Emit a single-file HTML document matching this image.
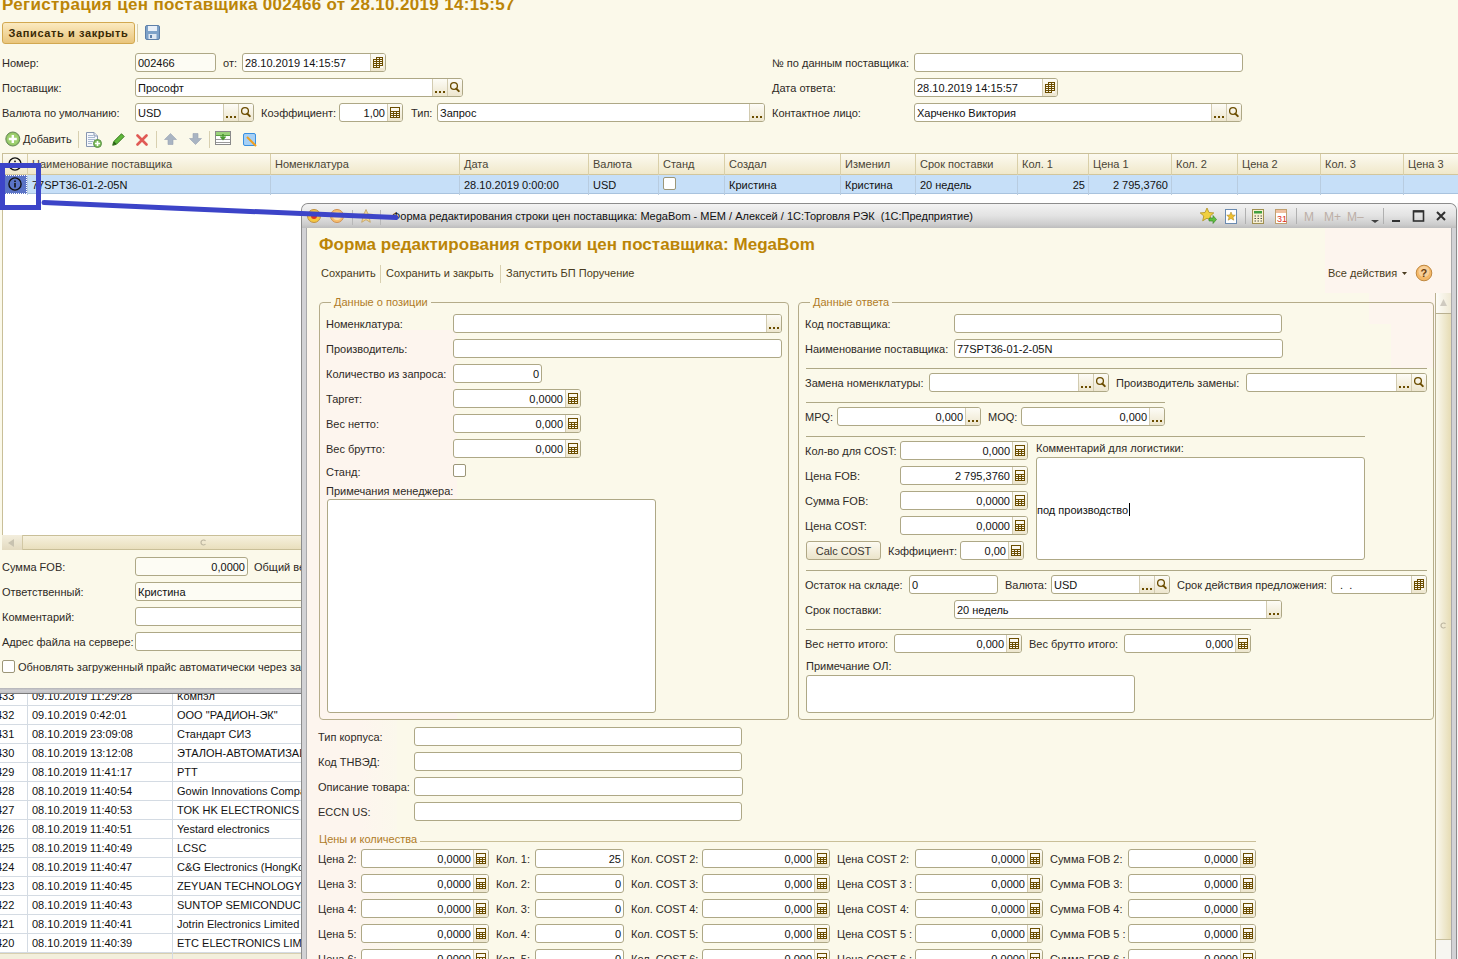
<!DOCTYPE html><html><head><meta charset="utf-8"><style>
*{box-sizing:border-box;margin:0;padding:0}
html,body{width:1458px;height:959px;overflow:hidden;background:#fbf9ea;font-family:"Liberation Sans",sans-serif;font-size:11px;color:#2e2a26}
.t{position:absolute;white-space:nowrap;color:#2e2a26}
.inp{position:absolute;border:1px solid #aea886;border-radius:3px;overflow:hidden}
.it{position:absolute;top:0;white-space:pre;color:#111}
.ib{position:absolute;top:0;width:15px;border-left:1px solid #d2cbb0;background:linear-gradient(#fdfcf6,#ede6ce)}
.ib svg{position:absolute;left:-1px;top:0}
.cb{position:absolute;border:1px solid #9c9678;border-radius:2px;background:#fff}
.grp{position:absolute;border:1px solid #b5ac8a;border-radius:4px;padding:0}
legend{padding:0 3px;height:14px;line-height:14px;color:#b07c28;font-size:11px}
.gt{position:absolute;height:14px;line-height:14px;color:#b07c28;background:#fbf9ea;text-align:center;white-space:nowrap}
.hc{position:absolute;top:0;height:21px;line-height:21px;padding-left:4px;border-left:1px solid #d9cfa8;white-space:nowrap;color:#4a4536;overflow:hidden}
.rc{position:absolute;top:1px;height:19px;line-height:19px;padding:0 3px 0 4px;border-left:1px solid #b8cce0;white-space:nowrap;color:#111;overflow:hidden}
</style></head><body>
<div class="t" style="left:2px;top:-5px;height:20px;line-height:20px;font-size:17px;font-weight:bold;color:#bb8507;letter-spacing:0.34px">Регистрация цен поставщика 002466 от 28.10.2019 14:15:57</div>
<div style="position:absolute;left:2px;top:22px;width:133px;height:22px;border:1px solid #d2a850;border-radius:3px;background:linear-gradient(#fbeac0,#e9c57c);"></div>
<div class="t" style="left:2px;top:22px;width:133px;height:22px;line-height:22px;text-align:center;font-weight:bold;color:#3a2a05;letter-spacing:0.6px">Записать и закрыть</div>
<div style="position:absolute;left:137px;top:24px;width:1px;height:18px;background:#d8d0b0"></div>
<svg style="position:absolute;left:145px;top:25px" width="15" height="15" viewBox="0 0 15 15"><rect x="0.5" y="0.5" width="14" height="14" rx="1.5" fill="#7ea2c8" stroke="#5d7fa8"/><rect x="3" y="1" width="9" height="5" fill="#e9f0f8"/><rect x="3.5" y="9" width="8" height="5" fill="#dfe8f2"/><rect x="5" y="10" width="2" height="3" fill="#5d7fa8"/></svg>
<div class="t" style="left:2px;top:54px;height:19px;line-height:19px;">Номер:</div>
<div class="inp" style="left:135px;top:53px;width:81px;height:19px;background:#fdfcf4">
<div class="it" style="left:2px;top:1px;line-height:17px;color:#111">002466</div>
</div>
<div class="t" style="left:223px;top:54px;height:19px;line-height:19px;">от:</div>
<div class="inp" style="left:242px;top:53px;width:144px;height:19px;background:#fff">
<div class="it" style="left:2px;top:1px;line-height:17px;color:#111">28.10.2019 14:15:57</div>
<div class="ib" style="right:0px;height:17px"><svg width="15" height="17" viewBox="0 0 15 17"><path d="M6 3h7v11h-7zM3 5h10v8h-10z" fill="#fbf8ee"/><path d="M6 3h7v1h-7zM6 4h1v1h-1zM9 4h1v1h-1zM12 4h1v1h-1zM3 5h10v1h-10zM3 6h1v1h-1zM6 6h1v1h-1zM9 6h1v1h-1zM12 6h1v1h-1zM3 7h10v1h-10zM3 8h1v1h-1zM6 8h1v1h-1zM9 8h1v1h-1zM12 8h1v1h-1zM3 9h10v1h-10zM3 10h1v1h-1zM6 10h1v1h-1zM9 10h1v1h-1zM12 10h1v1h-1zM3 11h10v1h-10zM3 12h1v1h-1zM6 12h1v1h-1zM9 12h1v1h-1zM3 13h7v1h-7z" fill="#6b4d00"/></svg></div>
</div>
<div class="t" style="left:772px;top:54px;height:19px;line-height:19px;">№ по данным поставщика:</div>
<div class="inp" style="left:914px;top:53px;width:329px;height:19px;background:#fff">
</div>
<div class="t" style="left:2px;top:79px;height:19px;line-height:19px;">Поставщик:</div>
<div class="inp" style="left:135px;top:78px;width:328px;height:19px;background:#fff">
<div class="it" style="left:2px;top:1px;line-height:17px;color:#111">Прософт</div>
<div class="ib" style="right:15px;height:17px"><svg width="15" height="17" viewBox="0 0 15 17"><path d="M3 12h2v2h-2zM7 12h2v2h-2zM11 12h2v2h-2z" fill="#6b4d00"/></svg></div>
<div class="ib" style="right:0px;height:17px"><svg width="15" height="17" viewBox="0 0 15 17"><circle cx="7" cy="7" r="3.4" fill="none" stroke="#6b4d00" stroke-width="1.3"/><path d="M9.3 9.6L11.8 12.1" stroke="#6b4d00" stroke-width="2" stroke-linecap="round"/></svg></div>
</div>
<div class="t" style="left:772px;top:79px;height:19px;line-height:19px;">Дата ответа:</div>
<div class="inp" style="left:914px;top:78px;width:144px;height:19px;background:#fff">
<div class="it" style="left:2px;top:1px;line-height:17px;color:#111">28.10.2019 14:15:57</div>
<div class="ib" style="right:0px;height:17px"><svg width="15" height="17" viewBox="0 0 15 17"><path d="M6 3h7v11h-7zM3 5h10v8h-10z" fill="#fbf8ee"/><path d="M6 3h7v1h-7zM6 4h1v1h-1zM9 4h1v1h-1zM12 4h1v1h-1zM3 5h10v1h-10zM3 6h1v1h-1zM6 6h1v1h-1zM9 6h1v1h-1zM12 6h1v1h-1zM3 7h10v1h-10zM3 8h1v1h-1zM6 8h1v1h-1zM9 8h1v1h-1zM12 8h1v1h-1zM3 9h10v1h-10zM3 10h1v1h-1zM6 10h1v1h-1zM9 10h1v1h-1zM12 10h1v1h-1zM3 11h10v1h-10zM3 12h1v1h-1zM6 12h1v1h-1zM9 12h1v1h-1zM3 13h7v1h-7z" fill="#6b4d00"/></svg></div>
</div>
<div class="t" style="left:2px;top:104px;height:19px;line-height:19px;">Валюта по умолчанию:</div>
<div class="inp" style="left:135px;top:103px;width:119px;height:19px;background:#fff">
<div class="it" style="left:2px;top:1px;line-height:17px;color:#111">USD</div>
<div class="ib" style="right:15px;height:17px"><svg width="15" height="17" viewBox="0 0 15 17"><path d="M3 12h2v2h-2zM7 12h2v2h-2zM11 12h2v2h-2z" fill="#6b4d00"/></svg></div>
<div class="ib" style="right:0px;height:17px"><svg width="15" height="17" viewBox="0 0 15 17"><circle cx="7" cy="7" r="3.4" fill="none" stroke="#6b4d00" stroke-width="1.3"/><path d="M9.3 9.6L11.8 12.1" stroke="#6b4d00" stroke-width="2" stroke-linecap="round"/></svg></div>
</div>
<div class="t" style="left:261px;top:104px;height:19px;line-height:19px;">Коэффициент:</div>
<div class="inp" style="left:339px;top:103px;width:64px;height:19px;background:#fff">
<div class="it" style="right:17px;top:1px;text-align:right;line-height:17px">1,00</div>
<div class="ib" style="right:0px;height:17px"><svg width="15" height="17" viewBox="0 0 15 17"><path d="M3 3h10v11h-10z" fill="#fbf8ee"/><path d="M3 3h10v1h-10zM3 4h1v1h-1zM12 4h1v1h-1zM3 5h1v1h-1zM12 5h1v1h-1zM3 6h1v1h-1zM12 6h1v1h-1zM3 7h10v1h-10zM3 8h1v1h-1zM6 8h1v1h-1zM9 8h1v1h-1zM12 8h1v1h-1zM3 9h10v1h-10zM3 10h1v1h-1zM6 10h1v1h-1zM9 10h1v1h-1zM12 10h1v1h-1zM3 11h10v1h-10zM3 12h1v1h-1zM6 12h1v1h-1zM9 12h1v1h-1zM12 12h1v1h-1zM3 13h10v1h-10z" fill="#6b4d00"/></svg></div>
</div>
<div class="t" style="left:411px;top:104px;height:19px;line-height:19px;">Тип:</div>
<div class="inp" style="left:437px;top:103px;width:328px;height:19px;background:#fff">
<div class="it" style="left:2px;top:1px;line-height:17px;color:#111">Запрос</div>
<div class="ib" style="right:0px;height:17px"><svg width="15" height="17" viewBox="0 0 15 17"><path d="M3 12h2v2h-2zM7 12h2v2h-2zM11 12h2v2h-2z" fill="#6b4d00"/></svg></div>
</div>
<div class="t" style="left:772px;top:104px;height:19px;line-height:19px;">Контактное лицо:</div>
<div class="inp" style="left:914px;top:103px;width:328px;height:19px;background:#fff">
<div class="it" style="left:2px;top:1px;line-height:17px;color:#111">Харченко Виктория</div>
<div class="ib" style="right:15px;height:17px"><svg width="15" height="17" viewBox="0 0 15 17"><path d="M3 12h2v2h-2zM7 12h2v2h-2zM11 12h2v2h-2z" fill="#6b4d00"/></svg></div>
<div class="ib" style="right:0px;height:17px"><svg width="15" height="17" viewBox="0 0 15 17"><circle cx="7" cy="7" r="3.4" fill="none" stroke="#6b4d00" stroke-width="1.3"/><path d="M9.3 9.6L11.8 12.1" stroke="#6b4d00" stroke-width="2" stroke-linecap="round"/></svg></div>
</div>
<svg style="position:absolute;left:5px;top:131px" width="16" height="16" viewBox="0 0 16 16"><circle cx="7.8" cy="8" r="7" fill="#8cc063" stroke="#6a8a5a" stroke-width="1"/><circle cx="7.8" cy="8" r="5.8" fill="#9fd070"/><path d="M7.8 4v8M3.8 8h8" stroke="#fff" stroke-width="2.4"/></svg>
<div class="t" style="left:23px;top:130px;height:18px;line-height:18px;">Добавить</div>
<div style="position:absolute;left:78px;top:131px;width:1px;height:17px;background:#d8d0b0"></div>
<svg style="position:absolute;left:86px;top:132px" width="16" height="16" viewBox="0 0 16 16"><path d="M0.5 0.5h7.5l3.5 3.5v10.5h-11z" fill="#f6f8fc" stroke="#8796b0"/><path d="M8 0.5v3.5h3.5" fill="#dfe6f0" stroke="#8796b0"/><path d="M2 3.5h5M2 5.5h7M2 7.5h7M2 9.5h5M2 11.5h4" stroke="#a8b8d0"/><circle cx="11.5" cy="11.5" r="4" fill="#7fbf5a" stroke="#5a8f48"/><path d="M11.5 9v5M9 11.5h5" stroke="#fff" stroke-width="1.6"/></svg>
<svg style="position:absolute;left:112px;top:133px" width="13" height="13" viewBox="0 0 13 13"><path d="M9.5 0.8l2.7 2.7-7.8 7.8-3.7 1 1-3.7z" fill="#5fb83a" stroke="#3a7a20"/><path d="M1 12l1-3.5 2.5 2.5z" fill="#2a5a18"/></svg>
<svg style="position:absolute;left:136px;top:134px" width="12" height="12" viewBox="0 0 12 12"><path d="M1.5 1.5l9 9M10.5 1.5l-9 9" stroke="#e05a55" stroke-width="2.6" stroke-linecap="round"/></svg>
<div style="position:absolute;left:156px;top:131px;width:1px;height:17px;background:#d8d0b0"></div>
<svg style="position:absolute;left:164px;top:133px" width="13" height="12" viewBox="0 0 13 12"><path d="M6.5 0.5l6 6h-3.5v5h-5v-5h-3.5z" fill="#a9b4c2" stroke="#98a3b3" stroke-width="0.6"/></svg>
<svg style="position:absolute;left:189px;top:133px" width="13" height="12" viewBox="0 0 13 12"><path d="M6.5 11.5l6-6h-3.5v-5h-5v5h-3.5z" fill="#a9b4c2" stroke="#98a3b3" stroke-width="0.6"/></svg>
<div style="position:absolute;left:209px;top:131px;width:1px;height:17px;background:#d8d0b0"></div>
<svg style="position:absolute;left:215px;top:131px" width="16" height="14" viewBox="0 0 16 14"><rect x="0.5" y="0.5" width="15" height="13" fill="#fff" stroke="#8a8a8a"/><rect x="1" y="1" width="14" height="3" fill="#9ad27a"/><path d="M1 4.5h14" stroke="#5aa040"/><path d="M1 8.5h14M1 11.5h14" stroke="#9a9a9a"/><path d="M8 3v5M5.5 5.5l2.5 2.8 2.5-2.8" stroke="#4a9a30" stroke-width="1.6" fill="none"/></svg>
<svg style="position:absolute;left:243px;top:133px" width="15" height="14" viewBox="0 0 15 14"><rect x="0.5" y="0.5" width="12" height="12" rx="1.5" fill="#a6d0f5" stroke="#3a90e0"/><path d="M4 4l9 9" stroke="#f0a020" stroke-width="2"/></svg>
<div style="position:absolute;left:2px;top:153px;width:1456px;height:397px;background:#fff;border-left:1px solid #c9bf98;border-top:1px solid #c9bf98"></div>
<div style="position:absolute;left:3px;top:154px;width:1455px;height:21px;background:linear-gradient(#fcfaf0,#f0e8ca);border-bottom:1px solid #d2c69c"></div>
<div style="position:absolute;left:3px;top:154px;width:1455px;height:21px">
<div class="hc" style="left:-1px;width:25px;border-left:none"></div>
<div class="hc" style="left:24px;width:243px;">Наименование поставщика</div>
<div class="hc" style="left:267px;width:189px;">Номенклатура</div>
<div class="hc" style="left:456px;width:129px;">Дата</div>
<div class="hc" style="left:585px;width:70px;">Валюта</div>
<div class="hc" style="left:655px;width:66px;">Станд</div>
<div class="hc" style="left:721px;width:116px;">Создал</div>
<div class="hc" style="left:837px;width:75px;">Изменил</div>
<div class="hc" style="left:912px;width:102px;">Срок поставки</div>
<div class="hc" style="left:1014px;width:71px;">Кол. 1</div>
<div class="hc" style="left:1085px;width:83px;">Цена 1</div>
<div class="hc" style="left:1168px;width:66px;">Кол. 2</div>
<div class="hc" style="left:1234px;width:83px;">Цена 2</div>
<div class="hc" style="left:1317px;width:83px;">Кол. 3</div>
<div class="hc" style="left:1400px;width:55px;">Цена 3</div>
</div>
<svg style="position:absolute;left:8px;top:157px" width="14" height="14" viewBox="0 0 14 14"><circle cx="7" cy="7" r="6.1" fill="none" stroke="#111" stroke-width="1.4"/><rect x="6.2" y="3.6" width="1.6" height="1.6" fill="#111"/></svg>
<div style="position:absolute;left:3px;top:175px;width:1455px;height:19px;background:#c6dff8;border-bottom:1px solid #a9c3de"></div>
<div style="position:absolute;left:3px;top:175px;width:1455px;height:19px">
<div class="rc" style="left:-1px;width:25px;border-left:none"></div>
<div class="rc" style="left:24px;width:243px;">77SPT36-01-2-05N</div>
<div class="rc" style="left:267px;width:189px;"></div>
<div class="rc" style="left:456px;width:129px;">28.10.2019 0:00:00</div>
<div class="rc" style="left:585px;width:70px;">USD</div>
<div class="rc" style="left:655px;width:66px;"></div>
<div class="rc" style="left:721px;width:116px;">Кристина</div>
<div class="rc" style="left:837px;width:75px;">Кристина</div>
<div class="rc" style="left:912px;width:102px;">20 недель</div>
<div class="rc" style="left:1014px;width:71px;text-align:right;">25</div>
<div class="rc" style="left:1085px;width:83px;text-align:right;">2 795,3760</div>
<div class="rc" style="left:1168px;width:66px;"></div>
<div class="rc" style="left:1234px;width:83px;"></div>
<div class="rc" style="left:1317px;width:83px;"></div>
<div class="rc" style="left:1400px;width:55px;"></div>
</div>
<div style="position:absolute;left:3px;top:175px;width:24px;height:19px;background:#5b74c6;border:1px dotted #fff"></div>
<svg style="position:absolute;left:8px;top:177px" width="14" height="14" viewBox="0 0 14 14"><circle cx="7" cy="7" r="6.1" fill="none" stroke="#111" stroke-width="1.4"/><rect x="6.2" y="3.5" width="1.6" height="1.6" fill="#111"/><rect x="6.2" y="6" width="1.6" height="4.5" fill="#111"/></svg>
<div class="cb" style="left:663px;top:177px;width:13px;height:13px"></div>
<div style="position:absolute;left:2px;top:535px;width:1456px;height:15px;background:linear-gradient(#f6f1de,#e9dfbd);border:1px solid #c9bf98"></div>
<div style="position:absolute;left:2px;top:535px;width:21px;height:15px;border-right:1px solid #d2c8a4;background:linear-gradient(#f3eedd,#e3dac0)"></div>
<svg style="position:absolute;left:8px;top:539px" width="6" height="8" viewBox="0 0 6 8"><path d="M6 0v8L0 4z" fill="#c8c2b0"/></svg>
<svg style="position:absolute;left:200px;top:539px" width="7" height="7" viewBox="0 0 7 7"><path d="M5.5 2A2.5 2.5 0 1 0 5.5 5" fill="none" stroke="#bdb6a0" stroke-width="1.2"/></svg>
<div class="t" style="left:2px;top:558px;height:19px;line-height:19px;">Сумма FOB:</div>
<div class="inp" style="left:135px;top:557px;width:113px;height:19px;background:#fdfcf4">
<div class="it" style="right:2px;top:1px;text-align:right;line-height:17px">0,0000</div>
</div>
<div class="t" style="left:254px;top:558px;height:19px;line-height:19px;">Общий вес</div>
<div class="t" style="left:2px;top:583px;height:19px;line-height:19px;">Ответственный:</div>
<div class="inp" style="left:135px;top:582px;width:285px;height:19px;background:#fdfcf4">
<div class="it" style="left:2px;top:1px;line-height:17px;color:#111">Кристина</div>
</div>
<div class="t" style="left:2px;top:608px;height:19px;line-height:19px;">Комментарий:</div>
<div class="inp" style="left:135px;top:607px;width:285px;height:19px;background:#fff">
</div>
<div class="t" style="left:2px;top:633px;height:19px;line-height:19px;">Адрес файла на сервере:</div>
<div class="inp" style="left:135px;top:632px;width:285px;height:19px;background:#fff">
</div>
<div class="cb" style="left:2px;top:660px;width:13px;height:13px"></div>
<div class="t" style="left:18px;top:658px;height:19px;line-height:19px;">Обновлять загруженный прайс автоматически через загрузку</div>
<div style="position:absolute;left:0;top:688px;width:301px;height:6px;background:linear-gradient(#b4b4b8,#cdcdd0 40%,#c4c4c8 75%,#7a7a7a 80%)"></div>
<div style="position:absolute;left:0;top:694px;width:301px;height:265px;background:#fff;overflow:hidden">
<div class="t" style="left:-4px;top:-7px;height:19px;line-height:19px;color:#111">433</div>
<div class="t" style="left:32px;top:-7px;height:19px;line-height:19px;color:#111">09.10.2019 11:29:28</div>
<div class="t" style="left:177px;top:-7px;height:19px;line-height:19px;color:#111">Компэл</div>
<div style="position:absolute;left:0;top:11px;width:301px;height:1px;background:#d4dbe3"></div>
<div class="t" style="left:-4px;top:12px;height:19px;line-height:19px;color:#111">432</div>
<div class="t" style="left:32px;top:12px;height:19px;line-height:19px;color:#111">09.10.2019 0:42:01</div>
<div class="t" style="left:177px;top:12px;height:19px;line-height:19px;color:#111">ООО "РАДИОН-ЭК"</div>
<div style="position:absolute;left:0;top:30px;width:301px;height:1px;background:#d4dbe3"></div>
<div class="t" style="left:-4px;top:31px;height:19px;line-height:19px;color:#111">431</div>
<div class="t" style="left:32px;top:31px;height:19px;line-height:19px;color:#111">08.10.2019 23:09:08</div>
<div class="t" style="left:177px;top:31px;height:19px;line-height:19px;color:#111">Стандарт СИЗ</div>
<div style="position:absolute;left:0;top:49px;width:301px;height:1px;background:#d4dbe3"></div>
<div class="t" style="left:-4px;top:50px;height:19px;line-height:19px;color:#111">430</div>
<div class="t" style="left:32px;top:50px;height:19px;line-height:19px;color:#111">08.10.2019 13:12:08</div>
<div class="t" style="left:177px;top:50px;height:19px;line-height:19px;color:#111">ЭТАЛОН-АВТОМАТИЗАЦИЯ</div>
<div style="position:absolute;left:0;top:68px;width:301px;height:1px;background:#d4dbe3"></div>
<div class="t" style="left:-4px;top:69px;height:19px;line-height:19px;color:#111">429</div>
<div class="t" style="left:32px;top:69px;height:19px;line-height:19px;color:#111">08.10.2019 11:41:17</div>
<div class="t" style="left:177px;top:69px;height:19px;line-height:19px;color:#111">PTT</div>
<div style="position:absolute;left:0;top:87px;width:301px;height:1px;background:#d4dbe3"></div>
<div class="t" style="left:-4px;top:88px;height:19px;line-height:19px;color:#111">428</div>
<div class="t" style="left:32px;top:88px;height:19px;line-height:19px;color:#111">08.10.2019 11:40:54</div>
<div class="t" style="left:177px;top:88px;height:19px;line-height:19px;color:#111">Gowin Innovations Company</div>
<div style="position:absolute;left:0;top:106px;width:301px;height:1px;background:#d4dbe3"></div>
<div class="t" style="left:-4px;top:107px;height:19px;line-height:19px;color:#111">427</div>
<div class="t" style="left:32px;top:107px;height:19px;line-height:19px;color:#111">08.10.2019 11:40:53</div>
<div class="t" style="left:177px;top:107px;height:19px;line-height:19px;color:#111">TOK HK ELECTRONICS</div>
<div style="position:absolute;left:0;top:125px;width:301px;height:1px;background:#d4dbe3"></div>
<div class="t" style="left:-4px;top:126px;height:19px;line-height:19px;color:#111">426</div>
<div class="t" style="left:32px;top:126px;height:19px;line-height:19px;color:#111">08.10.2019 11:40:51</div>
<div class="t" style="left:177px;top:126px;height:19px;line-height:19px;color:#111">Yestard electronics</div>
<div style="position:absolute;left:0;top:144px;width:301px;height:1px;background:#d4dbe3"></div>
<div class="t" style="left:-4px;top:145px;height:19px;line-height:19px;color:#111">425</div>
<div class="t" style="left:32px;top:145px;height:19px;line-height:19px;color:#111">08.10.2019 11:40:49</div>
<div class="t" style="left:177px;top:145px;height:19px;line-height:19px;color:#111">LCSC</div>
<div style="position:absolute;left:0;top:163px;width:301px;height:1px;background:#d4dbe3"></div>
<div class="t" style="left:-4px;top:164px;height:19px;line-height:19px;color:#111">424</div>
<div class="t" style="left:32px;top:164px;height:19px;line-height:19px;color:#111">08.10.2019 11:40:47</div>
<div class="t" style="left:177px;top:164px;height:19px;line-height:19px;color:#111">C&amp;G Electronics (HongKong)</div>
<div style="position:absolute;left:0;top:182px;width:301px;height:1px;background:#d4dbe3"></div>
<div class="t" style="left:-4px;top:183px;height:19px;line-height:19px;color:#111">423</div>
<div class="t" style="left:32px;top:183px;height:19px;line-height:19px;color:#111">08.10.2019 11:40:45</div>
<div class="t" style="left:177px;top:183px;height:19px;line-height:19px;color:#111">ZEYUAN TECHNOLOGY</div>
<div style="position:absolute;left:0;top:201px;width:301px;height:1px;background:#d4dbe3"></div>
<div class="t" style="left:-4px;top:202px;height:19px;line-height:19px;color:#111">422</div>
<div class="t" style="left:32px;top:202px;height:19px;line-height:19px;color:#111">08.10.2019 11:40:43</div>
<div class="t" style="left:177px;top:202px;height:19px;line-height:19px;color:#111">SUNTOP SEMICONDUCTOR</div>
<div style="position:absolute;left:0;top:220px;width:301px;height:1px;background:#d4dbe3"></div>
<div class="t" style="left:-4px;top:221px;height:19px;line-height:19px;color:#111">421</div>
<div class="t" style="left:32px;top:221px;height:19px;line-height:19px;color:#111">08.10.2019 11:40:41</div>
<div class="t" style="left:177px;top:221px;height:19px;line-height:19px;color:#111">Jotrin Electronics Limited</div>
<div style="position:absolute;left:0;top:239px;width:301px;height:1px;background:#d4dbe3"></div>
<div class="t" style="left:-4px;top:240px;height:19px;line-height:19px;color:#111">420</div>
<div class="t" style="left:32px;top:240px;height:19px;line-height:19px;color:#111">08.10.2019 11:40:39</div>
<div class="t" style="left:177px;top:240px;height:19px;line-height:19px;color:#111">ETC ELECTRONICS LIMITED</div>
<div style="position:absolute;left:0;top:258px;width:301px;height:1px;background:#d4dbe3"></div>
<div style="position:absolute;left:27px;top:0;width:1px;height:266px;background:#d4dbe3"></div>
<div style="position:absolute;left:0;top:259px;width:301px;height:6px;background:#f3efdc;border-top:1px solid #d8d0b0"></div>
<div style="position:absolute;left:172px;top:0;width:1px;height:266px;background:#d4dbe3"></div>
</div>
<div style="position:absolute;left:1457px;top:203px;width:1px;height:756px;background:#f6f6f6"></div>
<div style="position:absolute;left:301px;top:203px;width:1156px;height:756px;border-radius:7px 7px 0 0;border:1px solid #8c8c8c;border-bottom:none;background:#d2d2d5;overflow:hidden">
<div style="position:absolute;left:0;top:0;width:100%;height:24px;background:linear-gradient(#f3f3f3,#e2e2e2 50%,#cdcdcd 85%,#bdbdbd)"></div>
<div style="position:absolute;left:4px;top:24px;width:1px;height:100%;background:#a9a9ab"></div>
<div style="position:absolute;right:4px;top:24px;width:1px;height:100%;background:#a9a9ab"></div>
</div>
<div style="position:absolute;left:307px;top:228px;width:1144px;height:731px;background:#fbf9ea"></div>
<div style="position:absolute;left:307px;top:330px;width:150px;height:390px;background:#fdf5ee"></div>
<div style="position:absolute;left:307px;top:720px;width:90px;height:239px;background:linear-gradient(90deg,#fdf5ee 60%,#fbf8ec)"></div>
<div style="position:absolute;left:1325px;top:228px;width:126px;height:65px;background:#fdf5ee"></div>
<div style="position:absolute;left:1369px;top:293px;width:66px;height:31px;background:#fdf5ee"></div>
<div style="position:absolute;left:1391px;top:324px;width:44px;height:44px;background:#fdf5ee"></div>
<svg style="position:absolute;left:307px;top:208px" width="80" height="18" viewBox="0 0 80 18"><circle cx="7" cy="8" r="6.5" fill="#f5c842" stroke="#c09040"/><circle cx="7" cy="8" r="3" fill="#e03020"/><circle cx="30" cy="8" r="6.5" fill="#f8c070" stroke="#d09050"/><circle cx="30" cy="8" r="4" fill="#fbe0b0"/><path d="M45.5 2v15" stroke="#b8b8b8"/><path d="M59 1.5l2 4.5 4.8 0.4-3.6 3.1 1.1 4.8-4.3-2.6-4.3 2.6 1.1-4.8-3.6-3.1 4.8-0.4z" fill="#f8d890" stroke="#c0a060" stroke-width="0.8"/><path d="M73.5 2v15" stroke="#b8b8b8"/></svg>
<div class="t" style="left:392px;top:207px;height:19px;line-height:19px;color:#111">Форма редактирования строки цен поставщика: MegaBom - MEM / Алексей / 1С:Торговля РЭК  (1С:Предприятие)</div>
<svg style="position:absolute;left:1199px;top:206px" width="252" height="20" viewBox="0 0 252 20"><path d="M8 2l2 4.5 4.8 0.4-3.6 3.1 1.1 4.8-4.3-2.6-4.3 2.6 1.1-4.8-3.6-3.1 4.8-0.4z" fill="#f0d040" stroke="#b09020" stroke-width="0.8"/><path d="M10 12h4v-2.5l3.5 4-3.5 4v-2.5h-4z" fill="#60c040" stroke="#308020" stroke-width="0.6"/><rect x="26.5" y="3.5" width="11" height="14" fill="#fff" stroke="#6a8ab0"/><path d="M32 6l1.3 3 3 .2-2.3 2 .8 3-2.8-1.7-2.8 1.7.8-3-2.3-2 3-.2z" fill="#f0c030" stroke="#a08020" stroke-width="0.5"/><path d="M46.5 2v16" stroke="#b0b0b0"/><rect x="53.5" y="3.5" width="11" height="14" fill="#f8f0d0" stroke="#a09050"/><rect x="55" y="5" width="8" height="2.5" fill="#40a040"/><path d="M55.5 10h1.5M58.5 10h1.5M61.5 10h1.5M55.5 12.5h1.5M58.5 12.5h1.5M61.5 12.5h1.5M55.5 15h1.5M58.5 15h1.5M61.5 15h1.5" stroke="#505050"/><rect x="76.5" y="3.5" width="11" height="14" fill="#fff" stroke="#c0a070"/><rect x="77" y="4" width="10" height="3" fill="#f0c0a0"/><text x="78" y="16" font-family="Liberation Sans" font-size="9" fill="#e03020">31</text><path d="M97.5 2v16" stroke="#b0b0b0"/><text x="105" y="15" font-family="Liberation Sans" font-size="12" fill="#bcaea6">M</text><text x="125" y="15" font-family="Liberation Sans" font-size="12" fill="#bcaea6">M+</text><text x="148" y="15" font-family="Liberation Sans" font-size="12" fill="#bcaea6">M–</text><path d="M172 14h8l-4 3z" fill="#404040"/><path d="M184.5 2v16" stroke="#b0b0b0"/><path d="M193 15h8" stroke="#303030" stroke-width="2"/><rect x="214.5" y="5" width="10" height="10" fill="none" stroke="#303030" stroke-width="1.6"/><path d="M214.5 5.5h10" stroke="#303030" stroke-width="2"/><path d="M238 6l8 8M246 6l-8 8" stroke="#303030" stroke-width="2"/></svg>
<div class="t" style="left:319px;top:235px;height:20px;line-height:20px;font-size:17px;font-weight:bold;color:#bb8507;letter-spacing:0.03px">Форма редактирования строки цен поставщика: MegaBom</div>
<div class="t" style="left:321px;top:264px;height:18px;line-height:18px;color:#4a3c20">Сохранить</div>
<div style="position:absolute;left:380px;top:265px;width:1px;height:18px;background:#d8d0b0"></div>
<div class="t" style="left:386px;top:264px;height:18px;line-height:18px;color:#4a3c20">Сохранить и закрыть</div>
<div style="position:absolute;left:500px;top:265px;width:1px;height:18px;background:#d8d0b0"></div>
<div class="t" style="left:506px;top:264px;height:18px;line-height:18px;color:#4a3c20">Запустить БП Поручение</div>
<div class="t" style="left:1328px;top:264px;height:18px;line-height:18px;color:#4a3c20">Все действия</div>
<svg style="position:absolute;left:1402px;top:272px" width="5" height="3" viewBox="0 0 5 3"><path d="M0 0h5l-2.5 3z" fill="#4a3c20"/></svg>
<svg style="position:absolute;left:1415px;top:264px" width="18" height="18" viewBox="0 0 18 18"><circle cx="9" cy="9" r="7.8" fill="#f4b868" stroke="#c08840"/><circle cx="9" cy="7.5" r="5.5" fill="#f8d09a"/><text x="5.6" y="13" font-family="Liberation Sans" font-size="11" font-weight="bold" fill="#6a4010">?</text></svg>
<div style="position:absolute;left:1435px;top:293px;width:16px;height:666px;background:linear-gradient(90deg,#faf8ee,#e6dcb4);border-left:1px solid #b9b090"></div>
<div style="position:absolute;left:1435px;top:939px;width:16px;height:20px;background:#f7f6f1;border-left:1px solid #b9b090;border-top:1px solid #c8bf9c"></div>
<svg style="position:absolute;left:1440px;top:622px" width="7" height="7" viewBox="0 0 7 7"><path d="M5.5 2A2.5 2.5 0 1 0 5.5 5" fill="none" stroke="#bdb6a0" stroke-width="1.2"/></svg>
<div style="position:absolute;left:1435px;top:293px;width:16px;height:21px;border-bottom:1px solid #b9b090;border-left:1px solid #b9b090;background:linear-gradient(90deg,#fdfcf8,#efe9d4)"></div>
<svg style="position:absolute;left:1440px;top:299px" width="8" height="7" viewBox="0 0 8 7"><path d="M0 7h7L3.5 0z" fill="#cfcac0"/></svg>
<fieldset class="grp" style="left:319px;top:295px;width:470px;height:425px"><legend style="margin-left:11px">Данные о позиции</legend></fieldset>
<div class="t" style="left:326px;top:315px;height:19px;line-height:19px;">Номенклатура:</div>
<div class="inp" style="left:453px;top:314px;width:329px;height:19px;background:#fff">
<div class="ib" style="right:0px;height:17px"><svg width="15" height="17" viewBox="0 0 15 17"><path d="M3 12h2v2h-2zM7 12h2v2h-2zM11 12h2v2h-2z" fill="#6b4d00"/></svg></div>
</div>
<div class="t" style="left:326px;top:340px;height:19px;line-height:19px;">Производитель:</div>
<div class="inp" style="left:453px;top:339px;width:329px;height:19px;background:#fff">
</div>
<div class="t" style="left:326px;top:365px;height:19px;line-height:19px;">Количество из запроса:</div>
<div class="inp" style="left:453px;top:364px;width:89px;height:19px;background:#fff">
<div class="it" style="right:2px;top:1px;text-align:right;line-height:17px">0</div>
</div>
<div class="t" style="left:326px;top:390px;height:19px;line-height:19px;">Таргет:</div>
<div class="inp" style="left:453px;top:389px;width:128px;height:19px;background:#fff">
<div class="it" style="right:17px;top:1px;text-align:right;line-height:17px">0,0000</div>
<div class="ib" style="right:0px;height:17px"><svg width="15" height="17" viewBox="0 0 15 17"><path d="M3 3h10v11h-10z" fill="#fbf8ee"/><path d="M3 3h10v1h-10zM3 4h1v1h-1zM12 4h1v1h-1zM3 5h1v1h-1zM12 5h1v1h-1zM3 6h1v1h-1zM12 6h1v1h-1zM3 7h10v1h-10zM3 8h1v1h-1zM6 8h1v1h-1zM9 8h1v1h-1zM12 8h1v1h-1zM3 9h10v1h-10zM3 10h1v1h-1zM6 10h1v1h-1zM9 10h1v1h-1zM12 10h1v1h-1zM3 11h10v1h-10zM3 12h1v1h-1zM6 12h1v1h-1zM9 12h1v1h-1zM12 12h1v1h-1zM3 13h10v1h-10z" fill="#6b4d00"/></svg></div>
</div>
<div class="t" style="left:326px;top:415px;height:19px;line-height:19px;">Вес нетто:</div>
<div class="inp" style="left:453px;top:414px;width:128px;height:19px;background:#fff">
<div class="it" style="right:17px;top:1px;text-align:right;line-height:17px">0,000</div>
<div class="ib" style="right:0px;height:17px"><svg width="15" height="17" viewBox="0 0 15 17"><path d="M3 3h10v11h-10z" fill="#fbf8ee"/><path d="M3 3h10v1h-10zM3 4h1v1h-1zM12 4h1v1h-1zM3 5h1v1h-1zM12 5h1v1h-1zM3 6h1v1h-1zM12 6h1v1h-1zM3 7h10v1h-10zM3 8h1v1h-1zM6 8h1v1h-1zM9 8h1v1h-1zM12 8h1v1h-1zM3 9h10v1h-10zM3 10h1v1h-1zM6 10h1v1h-1zM9 10h1v1h-1zM12 10h1v1h-1zM3 11h10v1h-10zM3 12h1v1h-1zM6 12h1v1h-1zM9 12h1v1h-1zM12 12h1v1h-1zM3 13h10v1h-10z" fill="#6b4d00"/></svg></div>
</div>
<div class="t" style="left:326px;top:440px;height:19px;line-height:19px;">Вес брутто:</div>
<div class="inp" style="left:453px;top:439px;width:128px;height:19px;background:#fff">
<div class="it" style="right:17px;top:1px;text-align:right;line-height:17px">0,000</div>
<div class="ib" style="right:0px;height:17px"><svg width="15" height="17" viewBox="0 0 15 17"><path d="M3 3h10v11h-10z" fill="#fbf8ee"/><path d="M3 3h10v1h-10zM3 4h1v1h-1zM12 4h1v1h-1zM3 5h1v1h-1zM12 5h1v1h-1zM3 6h1v1h-1zM12 6h1v1h-1zM3 7h10v1h-10zM3 8h1v1h-1zM6 8h1v1h-1zM9 8h1v1h-1zM12 8h1v1h-1zM3 9h10v1h-10zM3 10h1v1h-1zM6 10h1v1h-1zM9 10h1v1h-1zM12 10h1v1h-1zM3 11h10v1h-10zM3 12h1v1h-1zM6 12h1v1h-1zM9 12h1v1h-1zM12 12h1v1h-1zM3 13h10v1h-10z" fill="#6b4d00"/></svg></div>
</div>
<div class="t" style="left:326px;top:464px;height:17px;line-height:17px;">Станд:</div>
<div class="cb" style="left:453px;top:464px;width:13px;height:13px"></div>
<div class="t" style="left:326px;top:483px;height:17px;line-height:17px;">Примечания менеджера:</div>
<div class="inp" style="left:327px;top:499px;width:329px;height:214px;background:#fff">
</div>
<fieldset class="grp" style="left:798px;top:295px;width:636px;height:425px"><legend style="margin-left:11px">Данные ответа</legend></fieldset>
<div class="t" style="left:805px;top:315px;height:19px;line-height:19px;">Код поставщика:</div>
<div class="inp" style="left:954px;top:314px;width:328px;height:19px;background:#fff">
</div>
<div class="t" style="left:805px;top:340px;height:19px;line-height:19px;">Наименование поставщика:</div>
<div class="inp" style="left:954px;top:339px;width:329px;height:19px;background:#fff">
<div class="it" style="left:2px;top:1px;line-height:17px;color:#111">77SPT36-01-2-05N</div>
</div>
<div style="position:absolute;left:806px;top:368px;width:621px;height:1px;background:#aea886"></div>
<div class="t" style="left:805px;top:374px;height:19px;line-height:19px;">Замена номенклатуры:</div>
<div class="inp" style="left:929px;top:373px;width:180px;height:19px;background:#fff">
<div class="ib" style="right:15px;height:17px"><svg width="15" height="17" viewBox="0 0 15 17"><path d="M3 12h2v2h-2zM7 12h2v2h-2zM11 12h2v2h-2z" fill="#6b4d00"/></svg></div>
<div class="ib" style="right:0px;height:17px"><svg width="15" height="17" viewBox="0 0 15 17"><circle cx="7" cy="7" r="3.4" fill="none" stroke="#6b4d00" stroke-width="1.3"/><path d="M9.3 9.6L11.8 12.1" stroke="#6b4d00" stroke-width="2" stroke-linecap="round"/></svg></div>
</div>
<div class="t" style="left:1116px;top:374px;height:19px;line-height:19px;">Производитель замены:</div>
<div class="inp" style="left:1246px;top:373px;width:181px;height:19px;background:#fff">
<div class="ib" style="right:15px;height:17px"><svg width="15" height="17" viewBox="0 0 15 17"><path d="M3 12h2v2h-2zM7 12h2v2h-2zM11 12h2v2h-2z" fill="#6b4d00"/></svg></div>
<div class="ib" style="right:0px;height:17px"><svg width="15" height="17" viewBox="0 0 15 17"><circle cx="7" cy="7" r="3.4" fill="none" stroke="#6b4d00" stroke-width="1.3"/><path d="M9.3 9.6L11.8 12.1" stroke="#6b4d00" stroke-width="2" stroke-linecap="round"/></svg></div>
</div>
<div style="position:absolute;left:806px;top:402px;width:359px;height:1px;background:#aea886"></div>
<div class="t" style="left:805px;top:408px;height:19px;line-height:19px;">MPQ:</div>
<div class="inp" style="left:837px;top:407px;width:144px;height:19px;background:#fff">
<div class="it" style="right:17px;top:1px;text-align:right;line-height:17px">0,000</div>
<div class="ib" style="right:0px;height:17px"><svg width="15" height="17" viewBox="0 0 15 17"><path d="M3 12h2v2h-2zM7 12h2v2h-2zM11 12h2v2h-2z" fill="#6b4d00"/></svg></div>
</div>
<div class="t" style="left:988px;top:408px;height:19px;line-height:19px;">MOQ:</div>
<div class="inp" style="left:1021px;top:407px;width:144px;height:19px;background:#fff">
<div class="it" style="right:17px;top:1px;text-align:right;line-height:17px">0,000</div>
<div class="ib" style="right:0px;height:17px"><svg width="15" height="17" viewBox="0 0 15 17"><path d="M3 12h2v2h-2zM7 12h2v2h-2zM11 12h2v2h-2z" fill="#6b4d00"/></svg></div>
</div>
<div style="position:absolute;left:806px;top:436px;width:559px;height:1px;background:#aea886"></div>
<div class="t" style="left:805px;top:442px;height:19px;line-height:19px;">Кол-во для COST:</div>
<div class="inp" style="left:900px;top:441px;width:128px;height:19px;background:#fff">
<div class="it" style="right:17px;top:1px;text-align:right;line-height:17px">0,000</div>
<div class="ib" style="right:0px;height:17px"><svg width="15" height="17" viewBox="0 0 15 17"><path d="M3 3h10v11h-10z" fill="#fbf8ee"/><path d="M3 3h10v1h-10zM3 4h1v1h-1zM12 4h1v1h-1zM3 5h1v1h-1zM12 5h1v1h-1zM3 6h1v1h-1zM12 6h1v1h-1zM3 7h10v1h-10zM3 8h1v1h-1zM6 8h1v1h-1zM9 8h1v1h-1zM12 8h1v1h-1zM3 9h10v1h-10zM3 10h1v1h-1zM6 10h1v1h-1zM9 10h1v1h-1zM12 10h1v1h-1zM3 11h10v1h-10zM3 12h1v1h-1zM6 12h1v1h-1zM9 12h1v1h-1zM12 12h1v1h-1zM3 13h10v1h-10z" fill="#6b4d00"/></svg></div>
</div>
<div class="t" style="left:1036px;top:440px;height:17px;line-height:17px;">Комментарий для логистики:</div>
<div class="t" style="left:805px;top:467px;height:19px;line-height:19px;">Цена FOB:</div>
<div class="inp" style="left:900px;top:466px;width:128px;height:19px;background:#fff">
<div class="it" style="right:17px;top:1px;text-align:right;line-height:17px">2 795,3760</div>
<div class="ib" style="right:0px;height:17px"><svg width="15" height="17" viewBox="0 0 15 17"><path d="M3 3h10v11h-10z" fill="#fbf8ee"/><path d="M3 3h10v1h-10zM3 4h1v1h-1zM12 4h1v1h-1zM3 5h1v1h-1zM12 5h1v1h-1zM3 6h1v1h-1zM12 6h1v1h-1zM3 7h10v1h-10zM3 8h1v1h-1zM6 8h1v1h-1zM9 8h1v1h-1zM12 8h1v1h-1zM3 9h10v1h-10zM3 10h1v1h-1zM6 10h1v1h-1zM9 10h1v1h-1zM12 10h1v1h-1zM3 11h10v1h-10zM3 12h1v1h-1zM6 12h1v1h-1zM9 12h1v1h-1zM12 12h1v1h-1zM3 13h10v1h-10z" fill="#6b4d00"/></svg></div>
</div>
<div class="t" style="left:805px;top:492px;height:19px;line-height:19px;">Сумма FOB:</div>
<div class="inp" style="left:900px;top:491px;width:128px;height:19px;background:#fff">
<div class="it" style="right:17px;top:1px;text-align:right;line-height:17px">0,0000</div>
<div class="ib" style="right:0px;height:17px"><svg width="15" height="17" viewBox="0 0 15 17"><path d="M3 3h10v11h-10z" fill="#fbf8ee"/><path d="M3 3h10v1h-10zM3 4h1v1h-1zM12 4h1v1h-1zM3 5h1v1h-1zM12 5h1v1h-1zM3 6h1v1h-1zM12 6h1v1h-1zM3 7h10v1h-10zM3 8h1v1h-1zM6 8h1v1h-1zM9 8h1v1h-1zM12 8h1v1h-1zM3 9h10v1h-10zM3 10h1v1h-1zM6 10h1v1h-1zM9 10h1v1h-1zM12 10h1v1h-1zM3 11h10v1h-10zM3 12h1v1h-1zM6 12h1v1h-1zM9 12h1v1h-1zM12 12h1v1h-1zM3 13h10v1h-10z" fill="#6b4d00"/></svg></div>
</div>
<div class="t" style="left:805px;top:517px;height:19px;line-height:19px;">Цена COST:</div>
<div class="inp" style="left:900px;top:516px;width:128px;height:19px;background:#fff">
<div class="it" style="right:17px;top:1px;text-align:right;line-height:17px">0,0000</div>
<div class="ib" style="right:0px;height:17px"><svg width="15" height="17" viewBox="0 0 15 17"><path d="M3 3h10v11h-10z" fill="#fbf8ee"/><path d="M3 3h10v1h-10zM3 4h1v1h-1zM12 4h1v1h-1zM3 5h1v1h-1zM12 5h1v1h-1zM3 6h1v1h-1zM12 6h1v1h-1zM3 7h10v1h-10zM3 8h1v1h-1zM6 8h1v1h-1zM9 8h1v1h-1zM12 8h1v1h-1zM3 9h10v1h-10zM3 10h1v1h-1zM6 10h1v1h-1zM9 10h1v1h-1zM12 10h1v1h-1zM3 11h10v1h-10zM3 12h1v1h-1zM6 12h1v1h-1zM9 12h1v1h-1zM12 12h1v1h-1zM3 13h10v1h-10z" fill="#6b4d00"/></svg></div>
</div>
<div style="position:absolute;left:806px;top:541px;width:75px;height:19px;border:1px solid #b0a886;border-radius:3px;background:linear-gradient(#fdfbf2,#ebe4ca);text-align:center;line-height:19px;color:#3b3630">Calc COST</div>
<div class="t" style="left:888px;top:542px;height:19px;line-height:19px;">Кэффициент:</div>
<div class="inp" style="left:960px;top:541px;width:64px;height:19px;background:#fff">
<div class="it" style="right:17px;top:1px;text-align:right;line-height:17px">0,00</div>
<div class="ib" style="right:0px;height:17px"><svg width="15" height="17" viewBox="0 0 15 17"><path d="M3 3h10v11h-10z" fill="#fbf8ee"/><path d="M3 3h10v1h-10zM3 4h1v1h-1zM12 4h1v1h-1zM3 5h1v1h-1zM12 5h1v1h-1zM3 6h1v1h-1zM12 6h1v1h-1zM3 7h10v1h-10zM3 8h1v1h-1zM6 8h1v1h-1zM9 8h1v1h-1zM12 8h1v1h-1zM3 9h10v1h-10zM3 10h1v1h-1zM6 10h1v1h-1zM9 10h1v1h-1zM12 10h1v1h-1zM3 11h10v1h-10zM3 12h1v1h-1zM6 12h1v1h-1zM9 12h1v1h-1zM12 12h1v1h-1zM3 13h10v1h-10z" fill="#6b4d00"/></svg></div>
</div>
<div class="inp" style="left:1036px;top:457px;width:329px;height:103px;background:#fff">
</div>
<div class="t" style="left:1037px;top:501px;height:19px;line-height:19px;color:#111">под производство</div>
<div style="position:absolute;left:1129px;top:503px;width:1px;height:13px;background:#000"></div>
<div style="position:absolute;left:806px;top:570px;width:621px;height:1px;background:#aea886"></div>
<div class="t" style="left:805px;top:576px;height:19px;line-height:19px;">Остаток на складе:</div>
<div class="inp" style="left:909px;top:575px;width:89px;height:19px;background:#fff">
<div class="it" style="left:2px;top:1px;line-height:17px;color:#111">0</div>
</div>
<div class="t" style="left:1005px;top:576px;height:19px;line-height:19px;">Валюта:</div>
<div class="inp" style="left:1051px;top:575px;width:119px;height:19px;background:#fff">
<div class="it" style="left:2px;top:1px;line-height:17px;color:#111">USD</div>
<div class="ib" style="right:15px;height:17px"><svg width="15" height="17" viewBox="0 0 15 17"><path d="M3 12h2v2h-2zM7 12h2v2h-2zM11 12h2v2h-2z" fill="#6b4d00"/></svg></div>
<div class="ib" style="right:0px;height:17px"><svg width="15" height="17" viewBox="0 0 15 17"><circle cx="7" cy="7" r="3.4" fill="none" stroke="#6b4d00" stroke-width="1.3"/><path d="M9.3 9.6L11.8 12.1" stroke="#6b4d00" stroke-width="2" stroke-linecap="round"/></svg></div>
</div>
<div class="t" style="left:1177px;top:576px;height:19px;line-height:19px;">Срок действия предложения:</div>
<div class="inp" style="left:1331px;top:575px;width:96px;height:19px;background:#fff">
<div class="it" style="left:2px;top:1px;line-height:17px;color:#111">  .  .</div>
<div class="ib" style="right:0px;height:17px"><svg width="15" height="17" viewBox="0 0 15 17"><path d="M6 3h7v11h-7zM3 5h10v8h-10z" fill="#fbf8ee"/><path d="M6 3h7v1h-7zM6 4h1v1h-1zM9 4h1v1h-1zM12 4h1v1h-1zM3 5h10v1h-10zM3 6h1v1h-1zM6 6h1v1h-1zM9 6h1v1h-1zM12 6h1v1h-1zM3 7h10v1h-10zM3 8h1v1h-1zM6 8h1v1h-1zM9 8h1v1h-1zM12 8h1v1h-1zM3 9h10v1h-10zM3 10h1v1h-1zM6 10h1v1h-1zM9 10h1v1h-1zM12 10h1v1h-1zM3 11h10v1h-10zM3 12h1v1h-1zM6 12h1v1h-1zM9 12h1v1h-1zM3 13h7v1h-7z" fill="#6b4d00"/></svg></div>
</div>
<div class="t" style="left:805px;top:601px;height:19px;line-height:19px;">Срок поставки:</div>
<div class="inp" style="left:954px;top:600px;width:328px;height:19px;background:#fff">
<div class="it" style="left:2px;top:1px;line-height:17px;color:#111">20 недель</div>
<div class="ib" style="right:0px;height:17px"><svg width="15" height="17" viewBox="0 0 15 17"><path d="M3 12h2v2h-2zM7 12h2v2h-2zM11 12h2v2h-2z" fill="#6b4d00"/></svg></div>
</div>
<div style="position:absolute;left:806px;top:629px;width:445px;height:1px;background:#aea886"></div>
<div class="t" style="left:805px;top:635px;height:19px;line-height:19px;">Вес нетто итого:</div>
<div class="inp" style="left:894px;top:634px;width:128px;height:19px;background:#fff">
<div class="it" style="right:17px;top:1px;text-align:right;line-height:17px">0,000</div>
<div class="ib" style="right:0px;height:17px"><svg width="15" height="17" viewBox="0 0 15 17"><path d="M3 3h10v11h-10z" fill="#fbf8ee"/><path d="M3 3h10v1h-10zM3 4h1v1h-1zM12 4h1v1h-1zM3 5h1v1h-1zM12 5h1v1h-1zM3 6h1v1h-1zM12 6h1v1h-1zM3 7h10v1h-10zM3 8h1v1h-1zM6 8h1v1h-1zM9 8h1v1h-1zM12 8h1v1h-1zM3 9h10v1h-10zM3 10h1v1h-1zM6 10h1v1h-1zM9 10h1v1h-1zM12 10h1v1h-1zM3 11h10v1h-10zM3 12h1v1h-1zM6 12h1v1h-1zM9 12h1v1h-1zM12 12h1v1h-1zM3 13h10v1h-10z" fill="#6b4d00"/></svg></div>
</div>
<div class="t" style="left:1029px;top:635px;height:19px;line-height:19px;">Вес брутто итого:</div>
<div class="inp" style="left:1124px;top:634px;width:127px;height:19px;background:#fff">
<div class="it" style="right:17px;top:1px;text-align:right;line-height:17px">0,000</div>
<div class="ib" style="right:0px;height:17px"><svg width="15" height="17" viewBox="0 0 15 17"><path d="M3 3h10v11h-10z" fill="#fbf8ee"/><path d="M3 3h10v1h-10zM3 4h1v1h-1zM12 4h1v1h-1zM3 5h1v1h-1zM12 5h1v1h-1zM3 6h1v1h-1zM12 6h1v1h-1zM3 7h10v1h-10zM3 8h1v1h-1zM6 8h1v1h-1zM9 8h1v1h-1zM12 8h1v1h-1zM3 9h10v1h-10zM3 10h1v1h-1zM6 10h1v1h-1zM9 10h1v1h-1zM12 10h1v1h-1zM3 11h10v1h-10zM3 12h1v1h-1zM6 12h1v1h-1zM9 12h1v1h-1zM12 12h1v1h-1zM3 13h10v1h-10z" fill="#6b4d00"/></svg></div>
</div>
<div class="t" style="left:806px;top:658px;height:17px;line-height:17px;">Примечание ОЛ:</div>
<div class="inp" style="left:806px;top:675px;width:329px;height:38px;background:#fff">
</div>
<div class="t" style="left:318px;top:728px;height:19px;line-height:19px;">Тип корпуса:</div>
<div class="inp" style="left:414px;top:727px;width:328px;height:19px;background:#fff">
</div>
<div class="t" style="left:318px;top:753px;height:19px;line-height:19px;">Код ТНВЭД:</div>
<div class="inp" style="left:414px;top:752px;width:328px;height:19px;background:#fff">
</div>
<div class="t" style="left:318px;top:778px;height:19px;line-height:19px;">Описание товара:</div>
<div class="inp" style="left:414px;top:777px;width:329px;height:19px;background:#fff">
</div>
<div class="t" style="left:318px;top:803px;height:19px;line-height:19px;">ECCN US:</div>
<div class="inp" style="left:414px;top:802px;width:328px;height:19px;background:#fff">
</div>
<div class="t" style="left:319px;top:832px;height:14px;line-height:14px;color:#b07c28">Цены и количества</div>
<div style="position:absolute;left:420px;top:841px;width:836px;height:1px;background:#c9bf98"></div>
<div class="t" style="left:318px;top:850px;height:19px;line-height:19px;">Цена 2:</div>
<div class="inp" style="left:361px;top:849px;width:128px;height:19px;background:#fff">
<div class="it" style="right:17px;top:1px;text-align:right;line-height:17px">0,0000</div>
<div class="ib" style="right:0px;height:17px"><svg width="15" height="17" viewBox="0 0 15 17"><path d="M3 3h10v11h-10z" fill="#fbf8ee"/><path d="M3 3h10v1h-10zM3 4h1v1h-1zM12 4h1v1h-1zM3 5h1v1h-1zM12 5h1v1h-1zM3 6h1v1h-1zM12 6h1v1h-1zM3 7h10v1h-10zM3 8h1v1h-1zM6 8h1v1h-1zM9 8h1v1h-1zM12 8h1v1h-1zM3 9h10v1h-10zM3 10h1v1h-1zM6 10h1v1h-1zM9 10h1v1h-1zM12 10h1v1h-1zM3 11h10v1h-10zM3 12h1v1h-1zM6 12h1v1h-1zM9 12h1v1h-1zM12 12h1v1h-1zM3 13h10v1h-10z" fill="#6b4d00"/></svg></div>
</div>
<div class="t" style="left:496px;top:850px;height:19px;line-height:19px;">Кол. 1:</div>
<div class="inp" style="left:535px;top:849px;width:89px;height:19px;background:#fff">
<div class="it" style="right:2px;top:1px;text-align:right;line-height:17px">25</div>
</div>
<div class="t" style="left:631px;top:850px;height:19px;line-height:19px;">Кол. COST 2:</div>
<div class="inp" style="left:702px;top:849px;width:128px;height:19px;background:#fff">
<div class="it" style="right:17px;top:1px;text-align:right;line-height:17px">0,000</div>
<div class="ib" style="right:0px;height:17px"><svg width="15" height="17" viewBox="0 0 15 17"><path d="M3 3h10v11h-10z" fill="#fbf8ee"/><path d="M3 3h10v1h-10zM3 4h1v1h-1zM12 4h1v1h-1zM3 5h1v1h-1zM12 5h1v1h-1zM3 6h1v1h-1zM12 6h1v1h-1zM3 7h10v1h-10zM3 8h1v1h-1zM6 8h1v1h-1zM9 8h1v1h-1zM12 8h1v1h-1zM3 9h10v1h-10zM3 10h1v1h-1zM6 10h1v1h-1zM9 10h1v1h-1zM12 10h1v1h-1zM3 11h10v1h-10zM3 12h1v1h-1zM6 12h1v1h-1zM9 12h1v1h-1zM12 12h1v1h-1zM3 13h10v1h-10z" fill="#6b4d00"/></svg></div>
</div>
<div class="t" style="left:837px;top:850px;height:19px;line-height:19px;">Цена COST 2:</div>
<div class="inp" style="left:915px;top:849px;width:128px;height:19px;background:#fff">
<div class="it" style="right:17px;top:1px;text-align:right;line-height:17px">0,0000</div>
<div class="ib" style="right:0px;height:17px"><svg width="15" height="17" viewBox="0 0 15 17"><path d="M3 3h10v11h-10z" fill="#fbf8ee"/><path d="M3 3h10v1h-10zM3 4h1v1h-1zM12 4h1v1h-1zM3 5h1v1h-1zM12 5h1v1h-1zM3 6h1v1h-1zM12 6h1v1h-1zM3 7h10v1h-10zM3 8h1v1h-1zM6 8h1v1h-1zM9 8h1v1h-1zM12 8h1v1h-1zM3 9h10v1h-10zM3 10h1v1h-1zM6 10h1v1h-1zM9 10h1v1h-1zM12 10h1v1h-1zM3 11h10v1h-10zM3 12h1v1h-1zM6 12h1v1h-1zM9 12h1v1h-1zM12 12h1v1h-1zM3 13h10v1h-10z" fill="#6b4d00"/></svg></div>
</div>
<div class="t" style="left:1050px;top:850px;height:19px;line-height:19px;">Сумма FOB 2:</div>
<div class="inp" style="left:1128px;top:849px;width:128px;height:19px;background:#fff">
<div class="it" style="right:17px;top:1px;text-align:right;line-height:17px">0,0000</div>
<div class="ib" style="right:0px;height:17px"><svg width="15" height="17" viewBox="0 0 15 17"><path d="M3 3h10v11h-10z" fill="#fbf8ee"/><path d="M3 3h10v1h-10zM3 4h1v1h-1zM12 4h1v1h-1zM3 5h1v1h-1zM12 5h1v1h-1zM3 6h1v1h-1zM12 6h1v1h-1zM3 7h10v1h-10zM3 8h1v1h-1zM6 8h1v1h-1zM9 8h1v1h-1zM12 8h1v1h-1zM3 9h10v1h-10zM3 10h1v1h-1zM6 10h1v1h-1zM9 10h1v1h-1zM12 10h1v1h-1zM3 11h10v1h-10zM3 12h1v1h-1zM6 12h1v1h-1zM9 12h1v1h-1zM12 12h1v1h-1zM3 13h10v1h-10z" fill="#6b4d00"/></svg></div>
</div>
<div class="t" style="left:318px;top:875px;height:19px;line-height:19px;">Цена 3:</div>
<div class="inp" style="left:361px;top:874px;width:128px;height:19px;background:#fff">
<div class="it" style="right:17px;top:1px;text-align:right;line-height:17px">0,0000</div>
<div class="ib" style="right:0px;height:17px"><svg width="15" height="17" viewBox="0 0 15 17"><path d="M3 3h10v11h-10z" fill="#fbf8ee"/><path d="M3 3h10v1h-10zM3 4h1v1h-1zM12 4h1v1h-1zM3 5h1v1h-1zM12 5h1v1h-1zM3 6h1v1h-1zM12 6h1v1h-1zM3 7h10v1h-10zM3 8h1v1h-1zM6 8h1v1h-1zM9 8h1v1h-1zM12 8h1v1h-1zM3 9h10v1h-10zM3 10h1v1h-1zM6 10h1v1h-1zM9 10h1v1h-1zM12 10h1v1h-1zM3 11h10v1h-10zM3 12h1v1h-1zM6 12h1v1h-1zM9 12h1v1h-1zM12 12h1v1h-1zM3 13h10v1h-10z" fill="#6b4d00"/></svg></div>
</div>
<div class="t" style="left:496px;top:875px;height:19px;line-height:19px;">Кол. 2:</div>
<div class="inp" style="left:535px;top:874px;width:89px;height:19px;background:#fff">
<div class="it" style="right:2px;top:1px;text-align:right;line-height:17px">0</div>
</div>
<div class="t" style="left:631px;top:875px;height:19px;line-height:19px;">Кол. COST 3:</div>
<div class="inp" style="left:702px;top:874px;width:128px;height:19px;background:#fff">
<div class="it" style="right:17px;top:1px;text-align:right;line-height:17px">0,000</div>
<div class="ib" style="right:0px;height:17px"><svg width="15" height="17" viewBox="0 0 15 17"><path d="M3 3h10v11h-10z" fill="#fbf8ee"/><path d="M3 3h10v1h-10zM3 4h1v1h-1zM12 4h1v1h-1zM3 5h1v1h-1zM12 5h1v1h-1zM3 6h1v1h-1zM12 6h1v1h-1zM3 7h10v1h-10zM3 8h1v1h-1zM6 8h1v1h-1zM9 8h1v1h-1zM12 8h1v1h-1zM3 9h10v1h-10zM3 10h1v1h-1zM6 10h1v1h-1zM9 10h1v1h-1zM12 10h1v1h-1zM3 11h10v1h-10zM3 12h1v1h-1zM6 12h1v1h-1zM9 12h1v1h-1zM12 12h1v1h-1zM3 13h10v1h-10z" fill="#6b4d00"/></svg></div>
</div>
<div class="t" style="left:837px;top:875px;height:19px;line-height:19px;">Цена COST 3 :</div>
<div class="inp" style="left:915px;top:874px;width:128px;height:19px;background:#fff">
<div class="it" style="right:17px;top:1px;text-align:right;line-height:17px">0,0000</div>
<div class="ib" style="right:0px;height:17px"><svg width="15" height="17" viewBox="0 0 15 17"><path d="M3 3h10v11h-10z" fill="#fbf8ee"/><path d="M3 3h10v1h-10zM3 4h1v1h-1zM12 4h1v1h-1zM3 5h1v1h-1zM12 5h1v1h-1zM3 6h1v1h-1zM12 6h1v1h-1zM3 7h10v1h-10zM3 8h1v1h-1zM6 8h1v1h-1zM9 8h1v1h-1zM12 8h1v1h-1zM3 9h10v1h-10zM3 10h1v1h-1zM6 10h1v1h-1zM9 10h1v1h-1zM12 10h1v1h-1zM3 11h10v1h-10zM3 12h1v1h-1zM6 12h1v1h-1zM9 12h1v1h-1zM12 12h1v1h-1zM3 13h10v1h-10z" fill="#6b4d00"/></svg></div>
</div>
<div class="t" style="left:1050px;top:875px;height:19px;line-height:19px;">Сумма FOB 3:</div>
<div class="inp" style="left:1128px;top:874px;width:128px;height:19px;background:#fff">
<div class="it" style="right:17px;top:1px;text-align:right;line-height:17px">0,0000</div>
<div class="ib" style="right:0px;height:17px"><svg width="15" height="17" viewBox="0 0 15 17"><path d="M3 3h10v11h-10z" fill="#fbf8ee"/><path d="M3 3h10v1h-10zM3 4h1v1h-1zM12 4h1v1h-1zM3 5h1v1h-1zM12 5h1v1h-1zM3 6h1v1h-1zM12 6h1v1h-1zM3 7h10v1h-10zM3 8h1v1h-1zM6 8h1v1h-1zM9 8h1v1h-1zM12 8h1v1h-1zM3 9h10v1h-10zM3 10h1v1h-1zM6 10h1v1h-1zM9 10h1v1h-1zM12 10h1v1h-1zM3 11h10v1h-10zM3 12h1v1h-1zM6 12h1v1h-1zM9 12h1v1h-1zM12 12h1v1h-1zM3 13h10v1h-10z" fill="#6b4d00"/></svg></div>
</div>
<div class="t" style="left:318px;top:900px;height:19px;line-height:19px;">Цена 4:</div>
<div class="inp" style="left:361px;top:899px;width:128px;height:19px;background:#fff">
<div class="it" style="right:17px;top:1px;text-align:right;line-height:17px">0,0000</div>
<div class="ib" style="right:0px;height:17px"><svg width="15" height="17" viewBox="0 0 15 17"><path d="M3 3h10v11h-10z" fill="#fbf8ee"/><path d="M3 3h10v1h-10zM3 4h1v1h-1zM12 4h1v1h-1zM3 5h1v1h-1zM12 5h1v1h-1zM3 6h1v1h-1zM12 6h1v1h-1zM3 7h10v1h-10zM3 8h1v1h-1zM6 8h1v1h-1zM9 8h1v1h-1zM12 8h1v1h-1zM3 9h10v1h-10zM3 10h1v1h-1zM6 10h1v1h-1zM9 10h1v1h-1zM12 10h1v1h-1zM3 11h10v1h-10zM3 12h1v1h-1zM6 12h1v1h-1zM9 12h1v1h-1zM12 12h1v1h-1zM3 13h10v1h-10z" fill="#6b4d00"/></svg></div>
</div>
<div class="t" style="left:496px;top:900px;height:19px;line-height:19px;">Кол. 3:</div>
<div class="inp" style="left:535px;top:899px;width:89px;height:19px;background:#fff">
<div class="it" style="right:2px;top:1px;text-align:right;line-height:17px">0</div>
</div>
<div class="t" style="left:631px;top:900px;height:19px;line-height:19px;">Кол. COST 4:</div>
<div class="inp" style="left:702px;top:899px;width:128px;height:19px;background:#fff">
<div class="it" style="right:17px;top:1px;text-align:right;line-height:17px">0,000</div>
<div class="ib" style="right:0px;height:17px"><svg width="15" height="17" viewBox="0 0 15 17"><path d="M3 3h10v11h-10z" fill="#fbf8ee"/><path d="M3 3h10v1h-10zM3 4h1v1h-1zM12 4h1v1h-1zM3 5h1v1h-1zM12 5h1v1h-1zM3 6h1v1h-1zM12 6h1v1h-1zM3 7h10v1h-10zM3 8h1v1h-1zM6 8h1v1h-1zM9 8h1v1h-1zM12 8h1v1h-1zM3 9h10v1h-10zM3 10h1v1h-1zM6 10h1v1h-1zM9 10h1v1h-1zM12 10h1v1h-1zM3 11h10v1h-10zM3 12h1v1h-1zM6 12h1v1h-1zM9 12h1v1h-1zM12 12h1v1h-1zM3 13h10v1h-10z" fill="#6b4d00"/></svg></div>
</div>
<div class="t" style="left:837px;top:900px;height:19px;line-height:19px;">Цена COST 4:</div>
<div class="inp" style="left:915px;top:899px;width:128px;height:19px;background:#fff">
<div class="it" style="right:17px;top:1px;text-align:right;line-height:17px">0,0000</div>
<div class="ib" style="right:0px;height:17px"><svg width="15" height="17" viewBox="0 0 15 17"><path d="M3 3h10v11h-10z" fill="#fbf8ee"/><path d="M3 3h10v1h-10zM3 4h1v1h-1zM12 4h1v1h-1zM3 5h1v1h-1zM12 5h1v1h-1zM3 6h1v1h-1zM12 6h1v1h-1zM3 7h10v1h-10zM3 8h1v1h-1zM6 8h1v1h-1zM9 8h1v1h-1zM12 8h1v1h-1zM3 9h10v1h-10zM3 10h1v1h-1zM6 10h1v1h-1zM9 10h1v1h-1zM12 10h1v1h-1zM3 11h10v1h-10zM3 12h1v1h-1zM6 12h1v1h-1zM9 12h1v1h-1zM12 12h1v1h-1zM3 13h10v1h-10z" fill="#6b4d00"/></svg></div>
</div>
<div class="t" style="left:1050px;top:900px;height:19px;line-height:19px;">Сумма FOB 4:</div>
<div class="inp" style="left:1128px;top:899px;width:128px;height:19px;background:#fff">
<div class="it" style="right:17px;top:1px;text-align:right;line-height:17px">0,0000</div>
<div class="ib" style="right:0px;height:17px"><svg width="15" height="17" viewBox="0 0 15 17"><path d="M3 3h10v11h-10z" fill="#fbf8ee"/><path d="M3 3h10v1h-10zM3 4h1v1h-1zM12 4h1v1h-1zM3 5h1v1h-1zM12 5h1v1h-1zM3 6h1v1h-1zM12 6h1v1h-1zM3 7h10v1h-10zM3 8h1v1h-1zM6 8h1v1h-1zM9 8h1v1h-1zM12 8h1v1h-1zM3 9h10v1h-10zM3 10h1v1h-1zM6 10h1v1h-1zM9 10h1v1h-1zM12 10h1v1h-1zM3 11h10v1h-10zM3 12h1v1h-1zM6 12h1v1h-1zM9 12h1v1h-1zM12 12h1v1h-1zM3 13h10v1h-10z" fill="#6b4d00"/></svg></div>
</div>
<div class="t" style="left:318px;top:925px;height:19px;line-height:19px;">Цена 5:</div>
<div class="inp" style="left:361px;top:924px;width:128px;height:19px;background:#fff">
<div class="it" style="right:17px;top:1px;text-align:right;line-height:17px">0,0000</div>
<div class="ib" style="right:0px;height:17px"><svg width="15" height="17" viewBox="0 0 15 17"><path d="M3 3h10v11h-10z" fill="#fbf8ee"/><path d="M3 3h10v1h-10zM3 4h1v1h-1zM12 4h1v1h-1zM3 5h1v1h-1zM12 5h1v1h-1zM3 6h1v1h-1zM12 6h1v1h-1zM3 7h10v1h-10zM3 8h1v1h-1zM6 8h1v1h-1zM9 8h1v1h-1zM12 8h1v1h-1zM3 9h10v1h-10zM3 10h1v1h-1zM6 10h1v1h-1zM9 10h1v1h-1zM12 10h1v1h-1zM3 11h10v1h-10zM3 12h1v1h-1zM6 12h1v1h-1zM9 12h1v1h-1zM12 12h1v1h-1zM3 13h10v1h-10z" fill="#6b4d00"/></svg></div>
</div>
<div class="t" style="left:496px;top:925px;height:19px;line-height:19px;">Кол. 4:</div>
<div class="inp" style="left:535px;top:924px;width:89px;height:19px;background:#fff">
<div class="it" style="right:2px;top:1px;text-align:right;line-height:17px">0</div>
</div>
<div class="t" style="left:631px;top:925px;height:19px;line-height:19px;">Кол. COST 5:</div>
<div class="inp" style="left:702px;top:924px;width:128px;height:19px;background:#fff">
<div class="it" style="right:17px;top:1px;text-align:right;line-height:17px">0,000</div>
<div class="ib" style="right:0px;height:17px"><svg width="15" height="17" viewBox="0 0 15 17"><path d="M3 3h10v11h-10z" fill="#fbf8ee"/><path d="M3 3h10v1h-10zM3 4h1v1h-1zM12 4h1v1h-1zM3 5h1v1h-1zM12 5h1v1h-1zM3 6h1v1h-1zM12 6h1v1h-1zM3 7h10v1h-10zM3 8h1v1h-1zM6 8h1v1h-1zM9 8h1v1h-1zM12 8h1v1h-1zM3 9h10v1h-10zM3 10h1v1h-1zM6 10h1v1h-1zM9 10h1v1h-1zM12 10h1v1h-1zM3 11h10v1h-10zM3 12h1v1h-1zM6 12h1v1h-1zM9 12h1v1h-1zM12 12h1v1h-1zM3 13h10v1h-10z" fill="#6b4d00"/></svg></div>
</div>
<div class="t" style="left:837px;top:925px;height:19px;line-height:19px;">Цена COST 5 :</div>
<div class="inp" style="left:915px;top:924px;width:128px;height:19px;background:#fff">
<div class="it" style="right:17px;top:1px;text-align:right;line-height:17px">0,0000</div>
<div class="ib" style="right:0px;height:17px"><svg width="15" height="17" viewBox="0 0 15 17"><path d="M3 3h10v11h-10z" fill="#fbf8ee"/><path d="M3 3h10v1h-10zM3 4h1v1h-1zM12 4h1v1h-1zM3 5h1v1h-1zM12 5h1v1h-1zM3 6h1v1h-1zM12 6h1v1h-1zM3 7h10v1h-10zM3 8h1v1h-1zM6 8h1v1h-1zM9 8h1v1h-1zM12 8h1v1h-1zM3 9h10v1h-10zM3 10h1v1h-1zM6 10h1v1h-1zM9 10h1v1h-1zM12 10h1v1h-1zM3 11h10v1h-10zM3 12h1v1h-1zM6 12h1v1h-1zM9 12h1v1h-1zM12 12h1v1h-1zM3 13h10v1h-10z" fill="#6b4d00"/></svg></div>
</div>
<div class="t" style="left:1050px;top:925px;height:19px;line-height:19px;">Сумма FOB 5 :</div>
<div class="inp" style="left:1128px;top:924px;width:128px;height:19px;background:#fff">
<div class="it" style="right:17px;top:1px;text-align:right;line-height:17px">0,0000</div>
<div class="ib" style="right:0px;height:17px"><svg width="15" height="17" viewBox="0 0 15 17"><path d="M3 3h10v11h-10z" fill="#fbf8ee"/><path d="M3 3h10v1h-10zM3 4h1v1h-1zM12 4h1v1h-1zM3 5h1v1h-1zM12 5h1v1h-1zM3 6h1v1h-1zM12 6h1v1h-1zM3 7h10v1h-10zM3 8h1v1h-1zM6 8h1v1h-1zM9 8h1v1h-1zM12 8h1v1h-1zM3 9h10v1h-10zM3 10h1v1h-1zM6 10h1v1h-1zM9 10h1v1h-1zM12 10h1v1h-1zM3 11h10v1h-10zM3 12h1v1h-1zM6 12h1v1h-1zM9 12h1v1h-1zM12 12h1v1h-1zM3 13h10v1h-10z" fill="#6b4d00"/></svg></div>
</div>
<div class="t" style="left:318px;top:950px;height:19px;line-height:19px;">Цена 6:</div>
<div class="inp" style="left:361px;top:949px;width:128px;height:19px;background:#fff">
<div class="it" style="right:17px;top:1px;text-align:right;line-height:17px">0,0000</div>
<div class="ib" style="right:0px;height:17px"><svg width="15" height="17" viewBox="0 0 15 17"><path d="M3 3h10v11h-10z" fill="#fbf8ee"/><path d="M3 3h10v1h-10zM3 4h1v1h-1zM12 4h1v1h-1zM3 5h1v1h-1zM12 5h1v1h-1zM3 6h1v1h-1zM12 6h1v1h-1zM3 7h10v1h-10zM3 8h1v1h-1zM6 8h1v1h-1zM9 8h1v1h-1zM12 8h1v1h-1zM3 9h10v1h-10zM3 10h1v1h-1zM6 10h1v1h-1zM9 10h1v1h-1zM12 10h1v1h-1zM3 11h10v1h-10zM3 12h1v1h-1zM6 12h1v1h-1zM9 12h1v1h-1zM12 12h1v1h-1zM3 13h10v1h-10z" fill="#6b4d00"/></svg></div>
</div>
<div class="t" style="left:496px;top:950px;height:19px;line-height:19px;">Кол. 5:</div>
<div class="inp" style="left:535px;top:949px;width:89px;height:19px;background:#fff">
<div class="it" style="right:2px;top:1px;text-align:right;line-height:17px">0</div>
</div>
<div class="t" style="left:631px;top:950px;height:19px;line-height:19px;">Кол. COST 6:</div>
<div class="inp" style="left:702px;top:949px;width:128px;height:19px;background:#fff">
<div class="it" style="right:17px;top:1px;text-align:right;line-height:17px">0,000</div>
<div class="ib" style="right:0px;height:17px"><svg width="15" height="17" viewBox="0 0 15 17"><path d="M3 3h10v11h-10z" fill="#fbf8ee"/><path d="M3 3h10v1h-10zM3 4h1v1h-1zM12 4h1v1h-1zM3 5h1v1h-1zM12 5h1v1h-1zM3 6h1v1h-1zM12 6h1v1h-1zM3 7h10v1h-10zM3 8h1v1h-1zM6 8h1v1h-1zM9 8h1v1h-1zM12 8h1v1h-1zM3 9h10v1h-10zM3 10h1v1h-1zM6 10h1v1h-1zM9 10h1v1h-1zM12 10h1v1h-1zM3 11h10v1h-10zM3 12h1v1h-1zM6 12h1v1h-1zM9 12h1v1h-1zM12 12h1v1h-1zM3 13h10v1h-10z" fill="#6b4d00"/></svg></div>
</div>
<div class="t" style="left:837px;top:950px;height:19px;line-height:19px;">Цена COST 6 :</div>
<div class="inp" style="left:915px;top:949px;width:128px;height:19px;background:#fff">
<div class="it" style="right:17px;top:1px;text-align:right;line-height:17px">0,0000</div>
<div class="ib" style="right:0px;height:17px"><svg width="15" height="17" viewBox="0 0 15 17"><path d="M3 3h10v11h-10z" fill="#fbf8ee"/><path d="M3 3h10v1h-10zM3 4h1v1h-1zM12 4h1v1h-1zM3 5h1v1h-1zM12 5h1v1h-1zM3 6h1v1h-1zM12 6h1v1h-1zM3 7h10v1h-10zM3 8h1v1h-1zM6 8h1v1h-1zM9 8h1v1h-1zM12 8h1v1h-1zM3 9h10v1h-10zM3 10h1v1h-1zM6 10h1v1h-1zM9 10h1v1h-1zM12 10h1v1h-1zM3 11h10v1h-10zM3 12h1v1h-1zM6 12h1v1h-1zM9 12h1v1h-1zM12 12h1v1h-1zM3 13h10v1h-10z" fill="#6b4d00"/></svg></div>
</div>
<div class="t" style="left:1050px;top:950px;height:19px;line-height:19px;">Сумма FOB 6 :</div>
<div class="inp" style="left:1128px;top:949px;width:128px;height:19px;background:#fff">
<div class="it" style="right:17px;top:1px;text-align:right;line-height:17px">0,0000</div>
<div class="ib" style="right:0px;height:17px"><svg width="15" height="17" viewBox="0 0 15 17"><path d="M3 3h10v11h-10z" fill="#fbf8ee"/><path d="M3 3h10v1h-10zM3 4h1v1h-1zM12 4h1v1h-1zM3 5h1v1h-1zM12 5h1v1h-1zM3 6h1v1h-1zM12 6h1v1h-1zM3 7h10v1h-10zM3 8h1v1h-1zM6 8h1v1h-1zM9 8h1v1h-1zM12 8h1v1h-1zM3 9h10v1h-10zM3 10h1v1h-1zM6 10h1v1h-1zM9 10h1v1h-1zM12 10h1v1h-1zM3 11h10v1h-10zM3 12h1v1h-1zM6 12h1v1h-1zM9 12h1v1h-1zM12 12h1v1h-1zM3 13h10v1h-10z" fill="#6b4d00"/></svg></div>
</div>
<svg style="position:absolute;left:0;top:0" width="1458" height="959" viewBox="0 0 1458 959"><rect x="2.5" y="165.5" width="36" height="42" fill="none" stroke="#3c44c8" stroke-width="5"/><path d="M44 202.6 L396 217.6" fill="none" stroke="#3c44c8" stroke-width="5" stroke-linecap="round"/></svg>
</body></html>
